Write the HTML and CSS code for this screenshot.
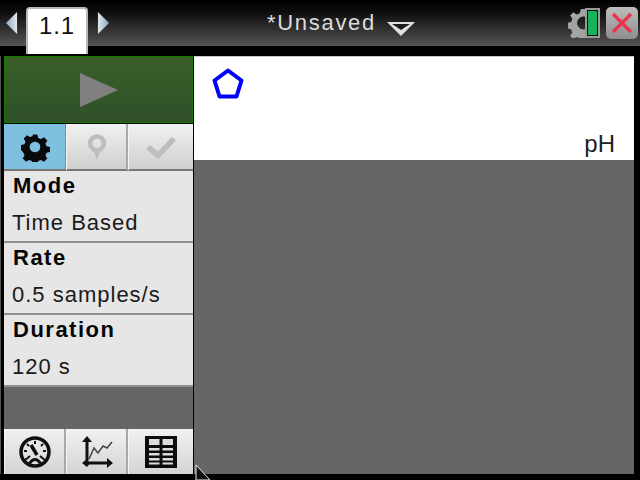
FILE: index.html
```html
<!DOCTYPE html>
<html lang="en">
<head>
<meta charset="utf-8">
<title>Vernier DataQuest</title>
<link rel="stylesheet" href="styles.css">
</head>
<body>
<div class="screen">
  <header class="topbar">
    <div class="pager">
      <svg class="arrow" width="13" height="24" viewBox="0 0 14 26"><defs><linearGradient id="ag" x1="0" y1="0" x2="1" y2="0"><stop offset="0" stop-color="#8fa6ba"/><stop offset="1" stop-color="#dfe8ee"/></linearGradient></defs><path d="M13 1 L1 13 L13 25 Z" fill="url(#ag)"/></svg>
      <div class="tab">1.1</div>
      <svg class="arrow" width="13" height="24" viewBox="0 0 14 26"><defs><linearGradient id="ah" x1="0" y1="0" x2="1" y2="0"><stop offset="0" stop-color="#dfe8ee"/><stop offset="1" stop-color="#8fa6ba"/></linearGradient></defs><path d="M1 1 L13 13 L1 25 Z" fill="url(#ah)"/></svg>
    </div>
    <div class="title">
      <span>*Unsaved</span>
      <svg width="28" height="16" viewBox="0 0 28 16"><path d="M0 1 L28 1 L14 15 Z" fill="#e0e0e0"/><path d="M5 3 L23 3 L14 9 Z" fill="#1c1c1c"/></svg>
    </div>
    <div class="status">
      <div class="gear-batt">
        <svg class="dim-gear" width="30" height="30" viewBox="0 0 28 28"><path d="M12 1h5l1 4 3 1 3-2 3 3-2 3 1 3 1 1v5l-1 1-1 3 2 3-3 3-3-2-3 1-1 3h-5l-1-3-3-1-3 2-3-3 2-3-1-3-4-1v-5l4-1 1-3-2-3 3-3 3 2 3-1z M14.500 8a6 6 0 1 0 .01 0z" fill="#a3a3a3" fill-rule="evenodd"/></svg>
        <div class="battery"><div class="charge"></div></div>
      </div>
      <div class="close">
        <svg width="24" height="24" viewBox="0 0 24 24"><path d="M3 3 L21 21 M21 3 L3 21" stroke="#e8344f" stroke-width="3.500" fill="none"/></svg>
      </div>
    </div>
  </header>
  <main class="workspace">
    <aside class="sidebar">
      <button class="play" type="button" aria-label="Start">
        <svg width="40" height="36" viewBox="0 0 40 36"><path d="M1 1 L39 18 L1 35 Z" fill="#808080"/></svg>
      </button>
      <div class="tools">
        <div class="tool active">
          <svg width="30" height="30" viewBox="0 0 28 28"><path d="M11.500 1h5l.8 3.600 2.800 1.200 3.200-2 3.500 3.500-2 3.200 1.200 2.800 3.500.8v5l-3.500.8-1.200 2.800 2 3.200-3.500 3.500-3.200-2-2.800 1.200-.8 3.400h-5l-.8-3.400-2.800-1.200-3.200 2-3.500-3.500 2-3.200-1.200-2.800L-.5 17v-5l3.500-.8L4.200 8.400l-2-3.200L5.700 1.700l3.200 2 2.800-1.200z M14 8.500a5.500 5.500 0 1 0 .01 0z" fill="#0a0a0a" fill-rule="evenodd" transform="translate(1.400 1.400) scale(.9)"/></svg>
        </div>
        <div class="tool">
          <svg width="22" height="28" viewBox="0 0 24 30"><path d="M12 1a10 10 0 0 1 10 10c0 5-4 8-7 10l-3 8-3-8C6 19 2 16 2 11A10 10 0 0 1 12 1z M12 6a5 5 0 1 0 .01 0z" fill="#bdbdbd" fill-rule="evenodd"/></svg>
        </div>
        <div class="tool">
          <svg width="30" height="24" viewBox="0 0 32 26"><path d="M2 13 L13 22 L30 4" fill="none" stroke="#bdbdbd" stroke-width="6"/></svg>
        </div>
      </div>
      <section class="setting"><h2>Mode</h2><p>Time Based</p></section>
      <section class="setting"><h2>Rate</h2><p>0.5 samples/s</p></section>
      <section class="setting"><h2>Duration</h2><p>120 s</p></section>
      <div class="spacer"></div>
      <div class="views">
        <div class="view">
          <svg width="32" height="32" viewBox="0 0 32 32"><circle cx="16" cy="16" r="14" fill="none" stroke="#111" stroke-width="3.500"/><path d="M12 9 L18 19" stroke="#111" stroke-width="3.500"/><path d="M5 25 L11 20 M27 25 L21 20 M16 5 V8 M8 8 L10 10 M24 8 L22 10 M5 15 H8 M27 15 H24" stroke="#111" stroke-width="2"/><path d="M10 28 Q16 19 22 28" stroke="#111" stroke-width="3" fill="none"/></svg>
        </div>
        <div class="view">
          <svg width="32" height="32" viewBox="0 0 32 32"><path d="M6 3 V27 M3 27 H29" fill="none" stroke="#111" stroke-width="3"/><path d="M6 0 L1 6 H11 Z M32 27 L26 22 V32 Z M6 31 L2 26 H10 Z M1 27 L6 23 V31 Z" fill="#111"/><path d="M8 23 L13 12 L17 17 L22 10 L26 12 L31 6" fill="none" stroke="#444" stroke-width="1.500"/></svg>
        </div>
        <div class="view">
          <svg width="32" height="32" viewBox="0 0 32 32"><rect width="32" height="32" fill="#0c0c0c"/><path d="M4 3h10.500v6H4z M17.500 3H28v6H17.500z M4 12h10.500v2.500H4z M17.500 12H28v2.500H17.500z M4 17h10.500v2.500H4z M17.500 17H28v2.500H17.500z M4 22h10.500v2.500H4z M17.500 22H28v2.500H17.500z M4 26.500h10.500v2H4z M17.500 26.500H28v2H17.500z" fill="#dcdcdc"/></svg>
        </div>
      </div>
    </aside>
    <section class="canvas">
      <div class="meter">
        <svg class="pentagon" width="34" height="32" viewBox="0 0 34 32"><path d="M17 3.500 L30.500 13.500 L25.500 29.500 L8.500 29.500 L3.500 13.500 Z" fill="none" stroke="#0000ff" stroke-width="4" stroke-linejoin="round"/></svg>
        <div class="unit">pH</div>
      </div>
      <div class="graph"></div>
    </section>
  </main>
  <svg class="cursor" width="16" height="15" viewBox="0 0 16 15"><path d="M1 0 L15 15 L1 15 Z" fill="#111" stroke="#eee" stroke-width="1"/></svg>
</div>
</body>
</html>
```
FILE: styles.css
```css
* { box-sizing: border-box; }
html, body { margin: 0; padding: 0; }
body { width: 640px; height: 480px; overflow: hidden; background: #000; font-family: "Liberation Sans", sans-serif; }
.screen { position: relative; width: 640px; height: 480px; background: #000; display: flex; flex-direction: column; }

.topbar { height: 46px; flex: none; display: flex; align-items: flex-start; background: linear-gradient(#000 0, #0d0d0d 12px, #545454 46px); }
.pager { display: flex; align-items: flex-start; padding: 7px 0 0 5px; width: 260px; }
.arrow { flex: none; margin-top: 4px; }
.tab { flex: none; width: 62px; height: 47px; margin: 0 9px 0 8px; background: #fff; border: 2px solid #b8b8b8; border-bottom: 0; border-radius: 4px 4px 0 0; color: #111; font-size: 24px; text-align: center; line-height: 33px; letter-spacing: .8px; z-index: 1; }
.title { display: flex; align-items: center; gap: 11px; color: #dcdcdc; font-size: 22px; letter-spacing: 1.700px; height: 46px; padding: 0 0 0 7px; }
.title svg { margin-top: 12px; }
.status { margin-left: auto; display: flex; align-items: center; height: 46px; padding: 0 2px 0 0; }
.gear-batt { display: flex; align-items: center; width: 32px; margin-right: 6px; }
.dim-gear { flex: none; }
.battery { flex: none; width: 15px; height: 30px; margin-left: -13px; background: #101010; border: 2px solid #9a9a9a; padding: 1px; position: relative; }
.charge { width: 100%; height: 100%; background: #14b35c; }
.close { width: 32px; height: 32px; border-radius: 5px; background: linear-gradient(#bdbdbd, #8e8e8e); display: flex; align-items: center; justify-content: center; }

.workspace { flex: none; height: 418px; margin-top: 10px; padding-left: 3px; display: flex; gap: 1px; box-shadow: inset 1px 0 0 #555; }
.sidebar { width: 190px; height: 418px; display: flex; flex-direction: column; background: #000; padding-left: 1px; }
.play { height: 67px; flex: none; padding: 0; border: 1px solid #147a00; background: linear-gradient(#3a5f28, #30502a); display: flex; align-items: center; justify-content: center; margin-bottom: 1px; }
.tools { flex: none; height: 47px; display: flex; }
.tool { flex: 0 0 62px; display: flex; align-items: center; justify-content: center; background: linear-gradient(#f0f1f0, #cfcfcf); border-right: 2px solid #a8a8a8; border-left: 1px solid #f5f5f5; border-bottom: 2px solid #777; }
.tool:last-child { flex: 1; border-right: 0; }
.tool.active { background: #7fc0e0; border-left: 0; border-right: 1px solid #5d93ad; }
.setting { height: 72px; flex: none; background: #e6e6e6; border-bottom: 2px solid #8f8f8f; color: #1a1a1a; }
.setting h2 { margin: 0; padding: 3px 0 0 9px; font-size: 22px; line-height: 24px; font-weight: bold; letter-spacing: 1.500px; color: #050505; }
.setting p { margin: 0; padding: 13px 0 0 8px; font-size: 22px; line-height: 24px; letter-spacing: 1px; }
.spacer { flex: 1; background: #666; }
.views { flex: none; height: 45px; display: flex; }
.view { flex: 0 0 62px; display: flex; align-items: center; justify-content: center; background: linear-gradient(#f0f1f0, #d4d4d4); border-right: 2px solid #a8a8a8; border-left: 1px solid #f5f5f5; }
.view:last-child { flex: 1; border-right: 0; }

.canvas { width: 440px; height: 418px; display: flex; flex-direction: column; }
.meter { height: 104px; flex: none; background: #fff; border-top: 1px solid #c8c8c8; padding: 10px 0 0 17px; display: flex; justify-content: space-between; }
.pentagon { flex: none; }
.unit { align-self: flex-end; padding: 0 19px 3px 0; font-size: 24px; line-height: 27px; color: #222; }
.graph { flex: 1; background: #666; }
.cursor { position: absolute; left: 195px; top: 465px; }
```
